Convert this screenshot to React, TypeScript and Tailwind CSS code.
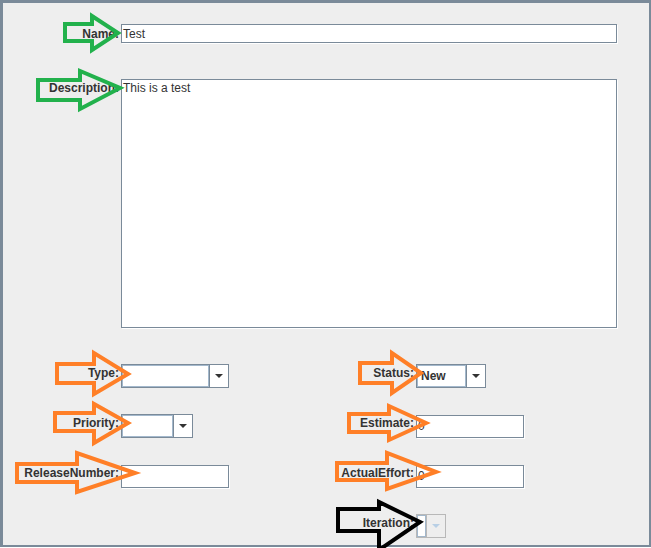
type Arrow = {
  x0: number;
  y1: number;
  y2: number;
  h: number;
  yt: number;
  yb: number;
  tx: number;
  ty: number;
  color: string;
};

const arrows: Arrow[] = [
  { x0: 65, y1: 24, y2: 41, h: 92, yt: 16, yb: 50, tx: 118, ty: 33, color: "#22b14c" },
  { x0: 38, y1: 80, y2: 100, h: 80, yt: 71, yb: 109, tx: 120, ty: 88, color: "#22b14c" },
  { x0: 57, y1: 364, y2: 383, h: 94, yt: 353, yb: 394, tx: 128, ty: 374, color: "#ff7f27" },
  { x0: 55, y1: 413, y2: 431, h: 94, yt: 404, yb: 443, tx: 128, ty: 423, color: "#ff7f27" },
  { x0: 17, y1: 464, y2: 482, h: 77, yt: 453, yb: 492, tx: 135, ty: 473, color: "#ff7f27" },
  { x0: 360, y1: 363, y2: 383, h: 392, yt: 353, yb: 393, tx: 421, ty: 373, color: "#ff7f27" },
  { x0: 349, y1: 414, y2: 432, h: 389, yt: 406, yb: 440, tx: 426, ty: 423, color: "#ff7f27" },
  { x0: 337, y1: 463, y2: 480, h: 387, yt: 453, yb: 489, tx: 436, ty: 472, color: "#ff7f27" },
  { x0: 338, y1: 509, y2: 531, h: 379, yt: 502, yb: 550, tx: 420, ty: 522, color: "#000000" },
];

function Label({ text }: { text: string }) {
  return <span className="pr-[2px] text-right text-[12px] leading-[18px] font-bold text-[#333333]">{text}</span>;
}

function TextField({ width, value }: { width: string; value?: string }) {
  return (
    <div className={`${width} flex h-[23px] items-center border border-[#7a8a99] bg-white pl-[1px] text-[12px] text-[#333333] shadow-[1px_1px_0_#ffffff]`}>
      {value}
    </div>
  );
}

function Combo({ width, value, disabled }: { width: string; value?: string; disabled?: boolean }) {
  return (
    <div className={`${width} flex h-[24px] border ${disabled ? "border-[#b8b8b8]" : "border-[#7a8a99]"} bg-white`}>
      <div className="flex flex-1 items-center border border-[#a3b8cc] pl-[3px] text-[12px] font-bold text-[#333333]">
        {value}
      </div>
      <div className={`flex w-[19px] items-center justify-center border-l ${disabled ? "border-[#b8b8b8] bg-[#eeeeee]" : "border-[#7a8a99]"}`}>
        <svg width="8" height="4" viewBox="0 0 8 4">
          <polygon points="0,0 8,0 4,4" fill={disabled ? "#b8cfe5" : "#333333"} />
        </svg>
      </div>
    </div>
  );
}

export default function App() {
  return (
    <div
      className="relative h-[548px] w-[651px] overflow-hidden bg-white"
      style={{ fontFamily: '"Liberation Sans", Arial, sans-serif' }}
    >
      <div className="h-[547px] w-[651px] border-t-[3px] border-l-[3px] border-r-2 border-b-2 border-[#7a8a99] bg-[#eeeeee] pt-[21px]">
        <div className="flex h-[19px] items-center">
          <div className="flex w-[118px] justify-end">
            <Label text="Name:" />
          </div>
          <div className="flex h-[19px] w-[496px] items-center border border-[#7a8a99] bg-white pl-[1px] text-[12px] text-[#333333] shadow-[1px_1px_0_#ffffff]">
            Test
          </div>
        </div>

        <div className="mt-[36px] flex">
          <div className="flex w-[118px] justify-end">
            <Label text="Description:" />
          </div>
          <div className="h-[249px] w-[496px] border border-[#7a8a99] bg-white pl-[1px] text-[12px] leading-[17px] text-[#333333] shadow-[1px_1px_0_#ffffff]">
            This is a test
          </div>
        </div>

        <div className="mt-[36px] grid grid-cols-[118px_177px_118px_1fr] gap-y-[26px]">
          <div className="flex h-[24px] items-start justify-end"><Label text="Type:" /></div>
          <div className="flex items-center"><Combo width="w-[108px]" /></div>
          <div className="flex items-start justify-end"><Label text="Status:" /></div>
          <div className="flex items-center"><Combo width="w-[70px]" value="New" /></div>

          <div className="flex h-[24px] items-start justify-end"><Label text="Priority:" /></div>
          <div className="flex items-center"><Combo width="w-[72px]" /></div>
          <div className="flex items-start justify-end"><Label text="Estimate:" /></div>
          <div className="flex items-center"><TextField width="w-[108px]" value="0" /></div>

          <div className="flex h-[24px] items-start justify-end"><Label text="ReleaseNumber:" /></div>
          <div className="flex items-center"><TextField width="w-[108px]" /></div>
          <div className="flex items-start justify-end"><Label text="ActualEffort:" /></div>
          <div className="flex items-center"><TextField width="w-[108px]" value="0" /></div>

          <div className="h-[24px]" />
          <div />
          <div className="flex items-start justify-end"><Label text="Iteration:" /></div>
          <div className="flex items-center"><Combo width="w-[30px]" disabled /></div>
        </div>
      </div>

      <svg className="pointer-events-none absolute left-0 top-0" width="651" height="548">
        {arrows.map((a, i) => (
          <polygon
            key={i}
            points={`${a.x0},${a.y1} ${a.h},${a.y1} ${a.h},${a.yt} ${a.tx},${a.ty} ${a.h},${a.yb} ${a.h},${a.y2} ${a.x0},${a.y2}`}
            fill="none"
            stroke={a.color}
            strokeWidth="4"
            strokeLinejoin="miter"
          />
        ))}
      </svg>
    </div>
  );
}
